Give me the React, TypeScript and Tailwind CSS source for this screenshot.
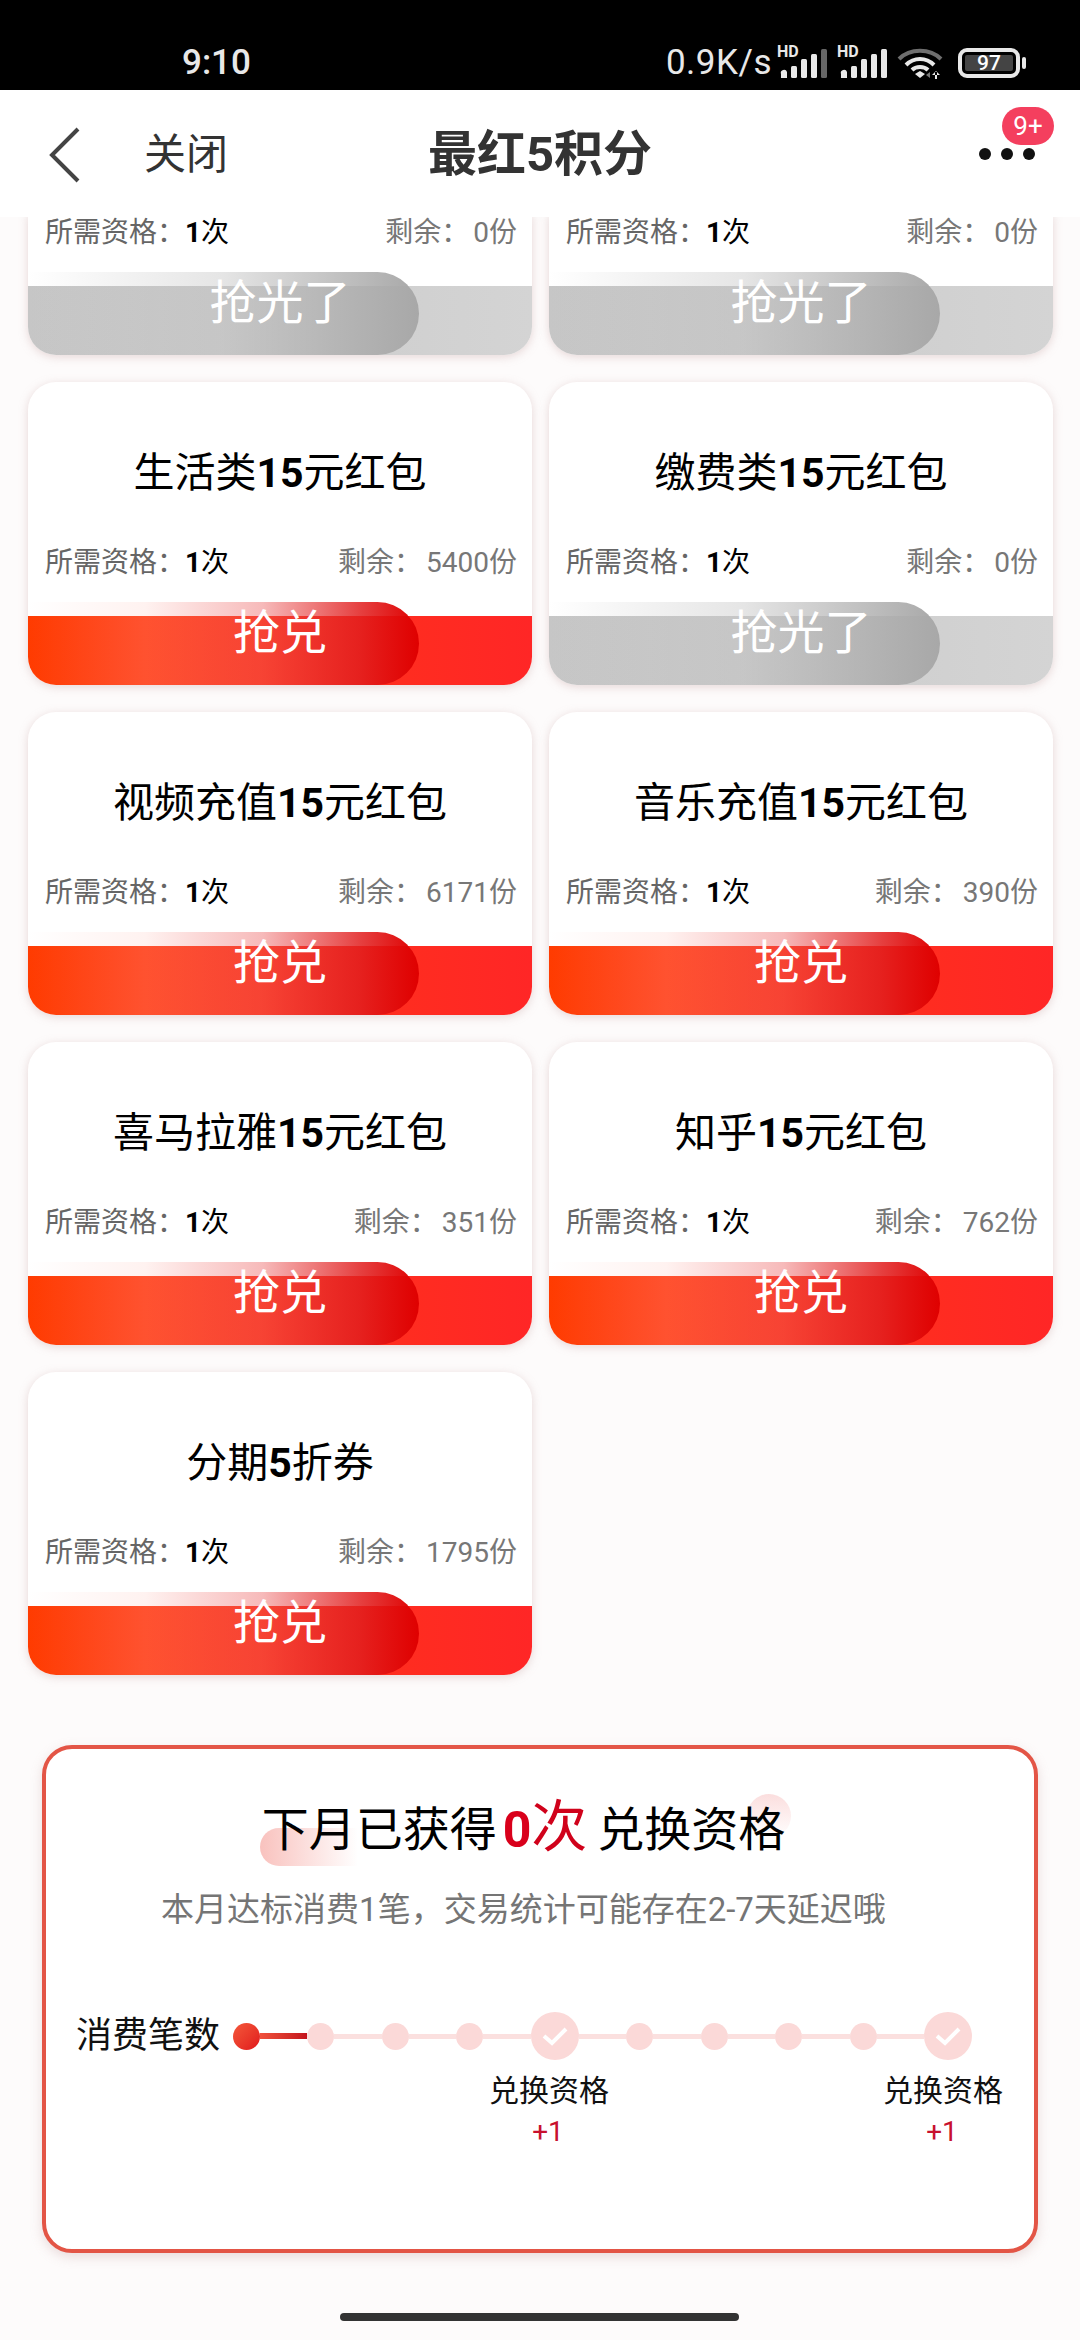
import React from 'react';

interface Reward {
  prefix?: string;
  amount?: string;
  suffix?: string;
  left: string;
  soldOut?: boolean;
}

// first row is scrolled under the header, only its lower part is on screen
const scrolledRewards: Reward[] = [
  { left: '0', soldOut: true },
  { left: '0', soldOut: true },
];

const rewards: Reward[] = [
  { prefix: '生活类', amount: '15', suffix: '元红包', left: '5400' },
  { prefix: '缴费类', amount: '15', suffix: '元红包', left: '0', soldOut: true },
  { prefix: '视频充值', amount: '15', suffix: '元红包', left: '6171' },
  { prefix: '音乐充值', amount: '15', suffix: '元红包', left: '390' },
  { prefix: '喜马拉雅', amount: '15', suffix: '元红包', left: '351' },
  { prefix: '知乎', amount: '15', suffix: '元红包', left: '762' },
  { prefix: '分期', amount: '5', suffix: '折券', left: '1795' },
];

const SignalIcon = ({ dimLast }: { dimLast?: boolean }) => (
  <div className="relative w-[50px] h-[32px]">
    <span className="absolute left-0 top-[-3px] text-[16px] leading-[16px] font-bold text-[#e8e8e8]">HD</span>
    <svg width="50" height="32" viewBox="0 0 50 32" className="absolute left-0 top-0">
      <path d="M4 31v-4a3 3 0 0 1 6 -2v6z" fill="#e8e8e8" />
      <rect x="14" y="19" width="6" height="12" rx="1.5" fill="#e8e8e8" />
      <rect x="24" y="12" width="6" height="19" rx="1.5" fill="#e8e8e8" />
      <rect x="34" y="7" width="6" height="24" rx="1.5" fill="#e8e8e8" />
      <rect x="44" y="2" width="6" height="29" rx="1.5" fill={dimLast ? '#666666' : '#e8e8e8'} />
    </svg>
  </div>
);

const WifiIcon = () => (
  <svg width="46" height="32" viewBox="0 0 46 32" fill="none">
    <path d="M2 12C13 1 33 1 44 12" stroke="#6e6e6e" strokeWidth="4" />
    <path d="M9 18C17 10 29 10 37 18" stroke="#e8e8e8" strokeWidth="4" />
    <path d="M15 23C19 19 27 19 31 23" stroke="#e8e8e8" strokeWidth="4" />
    <path d="M18 27l5-3 5 3-5 4z" fill="#e8e8e8" />
    <path d="M33 31v-6l-4 3z" fill="#777777" />
    <path d="M40 32v-7h-2v7zM35 28l4-4 4 4z" fill="#e8e8e8" />
  </svg>
);

const StatusBar = () => (
  <div className="h-[90px] shrink-0 bg-black flex items-center justify-between pl-[182px] pr-[54px] pt-[36px] text-[#e8e8e8]">
    <span className="text-[35px] leading-[40px] font-medium">9:10</span>
    <div className="flex items-center">
      <span className="text-[35px] leading-[40px] tracking-[0.5px] mr-[5px]">0.9K/s</span>
      <SignalIcon dimLast />
      <div className="w-[10px]" />
      <SignalIcon />
      <div className="w-[10px]" />
      <WifiIcon />
      <div className="ml-[15px] w-[62px] h-[30px] rounded-[9px] border-[4px] border-[#e8e8e8] p-[3px] flex">
        <div className="flex-1 rounded-[2px] bg-[#444444] flex items-center justify-center text-[21px] leading-none font-medium text-white">97</div>
      </div>
      <div className="ml-[2px] w-[4px] h-[12px] rounded-[2px] bg-[#e8e8e8]" />
    </div>
  </div>
);

const Header = () => (
  <div className="h-[127px] shrink-0 bg-white flex items-center relative pt-[2px] text-[#333333]">
    <svg width="38" height="58" viewBox="0 0 38 58" fill="none" className="ml-[46px]">
      <path d="M32 3L6 29l26 26" stroke="#444444" strokeWidth="4" />
    </svg>
    <span className="ml-[60px] text-[42px] leading-[50px]">关闭</span>
    <span className="absolute left-0 right-0 top-[35px] text-center text-[49px] leading-[60px] font-bold pointer-events-none">最红5积分</span>
    <div className="absolute left-[979px] top-[58px] flex gap-[10px]">
      <span className="w-[12px] h-[12px] rounded-full bg-[#111111]" />
      <span className="w-[12px] h-[12px] rounded-full bg-[#111111]" />
      <span className="w-[12px] h-[12px] rounded-full bg-[#111111]" />
    </div>
    <span className="absolute left-[1002px] top-[17px] w-[52px] h-[38px] rounded-full bg-[#f43f5e] flex items-center justify-center text-[26px] leading-none text-white">9+</span>
  </div>
);

const CardFooter = ({ left, soldOut }: Reward) => (
  <>
    <div className="h-[40px] pl-[17px] pr-[15px] flex items-center justify-between text-[28px] leading-[40px]">
      <span className="text-[#666666]">
        所需资格：<span className="font-bold text-black">1</span><span className="text-black">次</span>
      </span>
      <span className="text-[#777777]">
        剩余：<span className="ml-[4px]">{left}份</span>
      </span>
    </div>
    <div className="mt-[19px] relative h-[83px]">
      {soldOut ? (
        <>
          <div className="absolute left-0 right-0 bottom-0 h-[69px] bg-linear-to-r from-[#c6c6c6] to-[#d4d4d4]" />
          <div className="absolute left-0 top-0 bottom-0 w-[391px] rounded-r-[42px] bg-[linear-gradient(90deg,rgba(200,200,200,0)_0%,rgba(190,190,190,0.4)_50%,#a8a8a8_100%)]" />
        </>
      ) : (
        <>
          <div className="absolute left-0 right-0 bottom-0 h-[69px] bg-linear-to-r from-[#ff3b00] to-[#ff2626]" />
          <div className="absolute left-0 top-0 bottom-0 w-[391px] rounded-r-[42px] bg-[linear-gradient(90deg,rgba(255,255,255,0)_0%,rgba(255,190,180,0.2)_30%,rgba(235,90,90,0.42)_60%,rgba(225,30,30,0.85)_85%,#df0000_100%)]" />
        </>
      )}
      <div className="relative h-[60px] pt-[2px] flex items-center justify-center text-[47px] leading-[60px] text-white">
        {soldOut ? '抢光了' : '抢兑'}
      </div>
    </div>
  </>
);

const RewardCard = ({ reward }: { reward: Reward }) => (
  <div className="h-[303px] bg-white rounded-[28px] overflow-hidden shadow-[0_2px_10px_rgba(190,150,150,0.35)] flex flex-col">
    <div className="mt-[61px] h-[60px] flex items-center justify-center text-[41px] leading-[60px] text-black">
      {reward.prefix}
      <span className="font-bold">{reward.amount}</span>
      {reward.suffix}
    </div>
    <div className="mt-[40px]">
      <CardFooter {...reward} />
    </div>
  </div>
);

const ScrolledCard = ({ reward }: { reward: Reward }) => (
  <div className="h-[142px] bg-white rounded-b-[28px] overflow-hidden shadow-[0_2px_10px_rgba(190,150,150,0.35)]">
    <CardFooter {...reward} />
  </div>
);

const SmallNode = () => <span className="w-[27px] h-[27px] shrink-0 rounded-full bg-[#fbd9d8]" />;

const BigNode = () => (
  <span className="w-[48px] h-[48px] shrink-0 rounded-full bg-[#fbd9d8] flex items-center justify-center">
    <svg width="28" height="22" viewBox="0 0 28 22" fill="none">
      <path d="M3 11l8 7L25 4" stroke="#ffffff" strokeWidth="4" />
    </svg>
  </span>
);

const Rail = () => <span className="w-[47.5px] h-[5px] shrink-0 bg-[#fbe0df]" />;

const QualifyLabel = () => (
  <div className="w-[120px] text-center">
    <div className="h-[40px] text-[30px] leading-[40px] text-[#111111]">兑换资格</div>
    <div className="mt-[3px] pr-[2px] h-[36px] text-[28px] leading-[36px] text-[#c8102e]">+1</div>
  </div>
);

const ProgressPanel = () => (
  <div className="mt-[70px] mx-[42px] h-[508px] rounded-[30px] border-[4px] border-[#e35546] bg-white shadow-[0_4px_12px_rgba(190,150,150,0.3)]">
    <div className="mt-[51px] h-[60px] pr-[33px] flex justify-center">
      <div className="relative flex items-center text-[47px] leading-[60px] text-black whitespace-nowrap">
        <span className="absolute left-[-2px] top-[28px] w-[98px] h-[38px] rounded-l-full bg-linear-to-r from-[#f9c2be] to-transparent" />
        <span className="absolute right-[-6px] top-[-6px] w-[44px] h-[44px] rounded-full bg-linear-to-b from-[#fbdede] to-[#ffffff]" />
        <span className="relative">下月已获得</span>
        <span className="relative ml-[6px] text-[50px] font-bold text-[#d9001b]">0</span>
        <span className="relative text-[56px] text-[#d0021b] mt-[-6px]">次</span>
        <span className="relative ml-[10px]">兑换资格</span>
      </div>
    </div>
    <div className="mt-[28px] h-[44px] pr-[33px] text-center text-[33px] leading-[44px] text-[#757575] whitespace-nowrap">
      本月达标消费1笔，交易统计可能存在2-7天延迟哦
    </div>
    <div className="mt-[80px] h-[48px] pl-[30px] flex items-center">
      <span className="w-[144px] text-[36px] leading-[48px] text-[#111111] whitespace-nowrap">消费笔数</span>
      <div className="ml-[13px] flex items-center">
        <span className="w-[27px] h-[27px] shrink-0 rounded-full bg-linear-to-br from-[#f4563a] to-[#e0101c]" />
        <span className="w-[47px] h-[6px] shrink-0 bg-linear-to-r from-[#f0503c] to-[#c4101c]" />
        <SmallNode />
        <Rail />
        <SmallNode />
        <Rail />
        <SmallNode />
        <Rail />
        <BigNode />
        <Rail />
        <SmallNode />
        <Rail />
        <SmallNode />
        <Rail />
        <SmallNode />
        <Rail />
        <SmallNode />
        <Rail />
        <BigNode />
      </div>
    </div>
    <div className="mt-[11px] pl-[443px] flex gap-[274px]">
      <QualifyLabel />
      <QualifyLabel />
    </div>
  </div>
);

export default function App() {
  return (
    <div className="w-[1080px] h-[2340px] overflow-hidden flex flex-col bg-[#fdfbfb] font-['Roboto','Noto_Sans_CJK_SC',sans-serif]">
      <StatusBar />
      <Header />
      <div className="flex-1 overflow-hidden relative">
        <div className="mt-[-4px]">
          <div className="px-[28px] grid grid-cols-[504px_504px] gap-x-[17px] gap-y-[27px]">
            {scrolledRewards.map((reward, i) => (
              <ScrolledCard key={i} reward={reward} />
            ))}
            {rewards.map((reward, i) => (
              <RewardCard key={i} reward={reward} />
            ))}
          </div>
          <ProgressPanel />
        </div>
        <div className="absolute left-[340px] top-[2096px] w-[399px] h-[8px] rounded-full bg-[#333333]" />
      </div>
    </div>
  );
}
